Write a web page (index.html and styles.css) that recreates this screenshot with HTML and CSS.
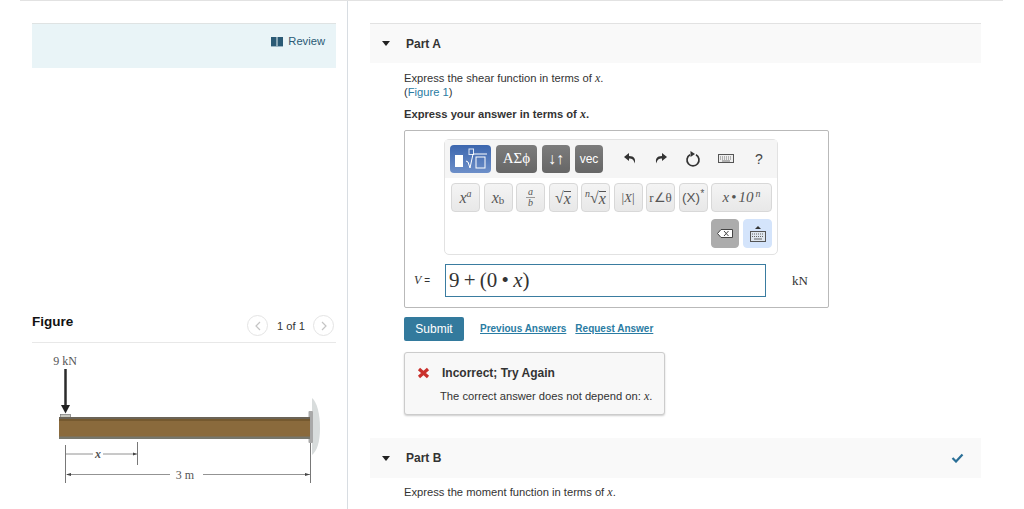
FILE: index.html
```html
<!DOCTYPE html>
<html lang="en">
<head>
  <meta charset="UTF-8">
  <title>Part A</title>
  <link rel="stylesheet" href="styles.css">
</head>
<body>
  <div class="page">
    <div class="left-col">
      <div class="review-bar">
        <svg class="book" width="14" height="10" viewBox="0 0 14 10"><path d="M1 0h5.500v9H1zM7.500 0H13v9H7.500z" fill="#2a5a75"/><path d="M1 9.500h12" stroke="#9bb6c4"/></svg>
        <span>Review</span>
      </div>
      <div class="figure-head">
        <div class="figure-title">Figure</div>
        <div class="pager">
          <span class="pager-btn"><svg width="8" height="10" viewBox="0 0 8 10"><path d="M6 1L2 5l4 4" fill="none" stroke="#c4c4c4" stroke-width="1.200"/></svg></span>
          <span class="pager-text">1 of 1</span>
          <span class="pager-btn"><svg width="8" height="10" viewBox="0 0 8 10"><path d="M2 1l4 4-4 4" fill="none" stroke="#c4c4c4" stroke-width="1.200"/></svg></span>
        </div>
      </div>
      <svg class="beam" width="304" height="150" viewBox="32 350 304 150">
        <text x="65" y="365" class="fig-text" text-anchor="middle">9 kN</text>
        <path d="M65.500 369V410" stroke="#2b2b2b" stroke-width="2.500"/>
        <path d="M61 405h9l-4.500 8.500z" fill="#222"/>
        <rect x="60.500" y="414.500" width="10" height="3" fill="#c8c8c0" stroke="#777" stroke-width=".7"/>
        <path d="M312 398c5 4 8 16 8 30s-3 23-8 27z" fill="#d8dcdc"/>
        <rect x="308.500" y="411" width="4.500" height="32" rx="1" fill="#a9a9a9"/>
        <rect x="59" y="417" width="251" height="22" fill="#8a6a3c"/>
        <rect x="59" y="417" width="251" height="2" fill="#6b6458"/>
        <rect x="59" y="419" width="251" height="2" fill="#75592f"/>
        <rect x="59" y="436.500" width="251" height="2.500" fill="#77776c"/>
        <path d="M65.500 445v38M137.500 442v23M310.500 443v40" stroke="#555" stroke-width=".8"/>
        <path d="M66 454h27M103 454h34M67 474.500h103M203 474.500h107" stroke="#777" stroke-width=".8"/>
        <path d="M66 474.500l5-1.500v3zM310 474.500l-5-1.500v3zM137 454l-4-1.500v3z" fill="#444"/>
        <text x="98" y="458" class="fig-text fig-italic" text-anchor="middle">x</text>
        <text x="185" y="479" class="fig-text" text-anchor="middle">3 m</text>
      </svg>
    </div>

    <div class="right-col">
      <div class="part-head part-a">
        <span class="caret"></span>
        <span class="part-name">Part A</span>
      </div>
      <div class="part-body">
        <p class="prompt">Express the shear function in terms of <i class="mvar">x</i>.<br>(<a class="link" href="#">Figure 1</a>)</p>
        <p class="instruction">Express your answer in terms of <i class="mvar">x</i>.</p>

        <div class="answer-box">
          <div class="toolbox">
            <div class="tool-top">
              <div class="tool-tab tab-blue">
                <svg width="34" height="22" viewBox="0 0 34 22"><rect x="1" y="7" width="8" height="12" fill="#fff"/><rect x="15" y="1" width="4.500" height="5.500" fill="none" stroke="#dfe8f5"/><path d="M12 13l2 1 2 6 3-14h14" fill="none" stroke="#fff"/><rect x="22" y="9" width="9" height="11" fill="none" stroke="#fff"/></svg>
              </div>
              <div class="tool-tab tab-gray tab-greek">ΑΣϕ</div>
              <div class="tool-tab tab-gray tab-arrows">↓↑</div>
              <div class="tool-tab tab-gray tab-vec">vec</div>
              <div class="tool-actions">
                <svg width="14" height="13" viewBox="0 0 14 13"><path d="M6 1L1 5l5 4V6.500c3 0 5 1 5.500 5 1.500-4 0-7.500-5.500-7.500z" fill="#333"/></svg>
                <svg width="14" height="13" viewBox="0 0 14 13"><path d="M8 1l5 4-5 4V6.500c-3 0-5 1-5.500 5C1 7.500 2.500 4 8 4z" fill="#333"/></svg>
                <svg width="16" height="17" viewBox="0 0 16 17"><path d="M5 4.700a6 6 0 1 0 6 0" fill="none" stroke="#333" stroke-width="1.700"/><path d="M5.500 1v6L10 4z" fill="#333"/></svg>
                <svg width="16" height="9" viewBox="0 0 16 9"><rect x=".5" y=".5" width="15" height="8" fill="#eee" stroke="#555"/><path d="M2 3h12M2 5h12" stroke="#777" stroke-dasharray="1 1"/><path d="M4 7h8" stroke="#777"/></svg>
                <span class="help">?</span>
              </div>
            </div>
            <div class="tool-row">
              <div class="key"><i>x</i><sup>a</sup></div>
              <div class="key"><i>x</i><sub>b</sub></div>
              <div class="key key-frac"><i>a</i><i>b</i></div>
              <div class="key">√<i class="over">x</i></div>
              <div class="key"><sup class="root-n">n</sup>√<i class="over">x</i></div>
              <div class="key key-small">|<i>X</i>|</div>
              <div class="key key-small">r∠θ</div>
              <div class="key key-sans">(X)<sup>*</sup></div>
              <div class="key key-wide"><i>x</i>•<i>10</i><sup>n</sup></div>
            </div>
            <div class="tool-row tool-row-end">
              <div class="key key-del">
                <svg width="16" height="9" viewBox="0 0 16 9"><path d="M4 .5h11.500v8H4L.5 4.500z" fill="#fff" stroke="#444"/><path d="M7 2l4.500 5M11.500 2L7 7" stroke="#444"/></svg>
              </div>
              <div class="key key-kbd">
                <svg width="16" height="16" viewBox="0 0 16 16"><path d="M8 0l3 3H5z" fill="#333"/><rect x=".5" y="5.500" width="15" height="10" fill="#dfe6ee" stroke="#555"/><path d="M2 8h12M2 10.500h12" stroke="#666" stroke-dasharray="1 1"/><path d="M4 13h8" stroke="#666"/></svg>
              </div>
            </div>
          </div>
          <div class="input-row">
            <span class="var-label"><i>V</i> <span class="equals">=</span></span>
            <div class="math-input">9 + (0 • <i>x</i>)</div>
            <span class="unit">kN</span>
          </div>
        </div>

        <div class="submit-row">
          <button class="submit-btn">Submit</button>
          <a class="action-link" href="#">Previous Answers</a>
          <a class="action-link" href="#">Request Answer</a>
        </div>

        <div class="feedback">
          <div class="feedback-title">
            <svg width="13" height="12" viewBox="0 0 13 12"><path d="M2 2l9 8M11 2l-9 8" stroke="#c9302c" stroke-width="3.200"/></svg>
            <span>Incorrect; Try Again</span>
          </div>
          <div class="feedback-text">The correct answer does not depend on: <i class="mvar">x</i>.</div>
        </div>
      </div>

      <div class="part-head part-b">
        <span class="caret"></span>
        <span class="part-name">Part B</span>
        <svg class="check" width="13" height="10" viewBox="0 0 13 10"><path d="M1.500 5l3.500 3.500 6.500-7" fill="none" stroke="#2a6f97" stroke-width="2.200"/></svg>
      </div>
      <div class="part-body">
        <p class="prompt prompt-b">Express the moment function in terms of <i class="mvar">x</i>.</p>
      </div>
    </div>
  </div>
</body>
</html>
```

FILE: styles.css
```css
html, body {
  margin: 0;
  padding: 0;
  height: 509px;
  overflow: hidden;
  background: #fff;
  font-family: "Liberation Sans", Arial, sans-serif;
  font-size: 11.2px;
  color: #333;
}

.page {
  display: flex;
  margin: 0 21px 0 20px;
  height: 509px;
  border-top: 1px solid #e2e2e2;
  box-sizing: border-box;
}

.left-col {
  width: 328px;
  box-sizing: border-box;
  padding: 22px 11px 0 12px;
  border-right: 1px solid #d8dde2;
}

.review-bar {
  display: flex;
  justify-content: flex-end;
  align-items: flex-start;
  gap: 4px;
  height: 45px;
  padding: 10px 11px 0 0;
  box-sizing: border-box;
  background: #e9f4f7;
  border-top: 1px solid #dfe3e3;
  color: #2a5a75;
  line-height: 15px;
}

.book {
  margin-top: 3px;
}

.figure-head {
  display: flex;
  justify-content: space-between;
  align-items: flex-start;
  height: 29px;
  margin-top: 239px;
  padding-bottom: 6px;
  border-bottom: 1px solid #e8e8e8;
}

.figure-title {
  margin-top: 7px;
  font-size: 13.500px;
  line-height: 15px;
  font-weight: bold;
  color: #111;
}

.pager {
  display: flex;
  align-items: center;
  gap: 9px;
  margin: 8px 2px 0 0;
}

.pager-text {
  width: 27px;
  white-space: nowrap;
}

.pager-btn {
  display: flex;
  align-items: center;
  justify-content: center;
  width: 21px;
  height: 21px;
  border: 1px solid #e4e4e4;
  border-radius: 50%;
  box-sizing: border-box;
}

.beam {
  display: block;
  margin-top: 7px;
}

.fig-text {
  font-family: "Liberation Serif", serif;
  font-size: 12px;
  fill: #555;
}

.fig-italic {
  font-style: italic;
  font-weight: bold;
}

.right-col {
  width: 634px;
  padding: 22px 0 0 22px;
  box-sizing: border-box;
}

.part-head {
  display: flex;
  align-items: center;
  width: 611px;
  height: 40px;
  background: #f9f9f9;
  box-sizing: border-box;
  padding-left: 12px;
}

.part-a {
  border-top: 1px solid #e2e2e2;
}

.part-b {
  margin-top: 23px;
}

.caret {
  width: 0;
  height: 0;
  border-left: 4.500px solid transparent;
  border-right: 4.500px solid transparent;
  border-top: 5px solid #222;
}

.part-name {
  margin-left: 16px;
  font-size: 12px;
  font-weight: bold;
  color: #333;
}

.check {
  margin-left: auto;
  margin-right: 17px;
}

.part-body {
  padding-left: 34px;
}

.prompt {
  margin: 8px 0 0;
  line-height: 14px;
}

.prompt-b {
  margin-top: 7px;
}

.instruction {
  margin: 8px 0 0;
  font-weight: bold;
  line-height: 14px;
}

.mvar {
  font-family: "Liberation Serif", serif;
  font-size: 12px;
}

.link {
  color: #2a7ca3;
  text-decoration: none;
}

.answer-box {
  width: 425px;
  height: 178px;
  margin-top: 9px;
  box-sizing: border-box;
  padding: 8px 0 0 39px;
  border: 1px solid #b9b9b9;
  border-radius: 2px;
}

.toolbox {
  width: 334px;
  height: 116px;
  box-sizing: border-box;
  border: 1px solid #e2e2e2;
  border-radius: 5px;
}

.tool-top {
  display: flex;
  align-items: center;
  gap: 5px;
  height: 38px;
  box-sizing: border-box;
  padding: 4px 0 5px 5px;
  background: #f5f5f5;
}

.tool-tab {
  display: flex;
  align-items: center;
  justify-content: center;
  height: 28px;
  border-radius: 4px;
  color: #fff;
  box-sizing: border-box;
}

.tab-blue {
  width: 41px;
  background: linear-gradient(#3c66ae, #6d8fc9);
}

.tab-gray {
  background: linear-gradient(#7c7c7c, #666);
}

.tab-greek {
  width: 41px;
  font-family: "Liberation Serif", serif;
  font-size: 15px;
}

.tab-arrows {
  width: 28px;
  font-size: 16px;
}

.tab-vec {
  width: 28px;
  font-size: 12px;
}

.tool-actions {
  display: flex;
  align-items: center;
  gap: 17px;
  margin-left: 15px;
}

.help {
  margin-left: 4px;
  font-size: 14px;
  color: #444;
}

.tool-row {
  display: flex;
  gap: 3.500px;
  padding: 5px 0 0 6px;
}

.tool-row-end {
  justify-content: flex-end;
  gap: 4px;
  padding: 7px 5px 0 0;
}

.key {
  display: flex;
  align-items: center;
  justify-content: center;
  width: 29px;
  height: 29px;
  box-sizing: border-box;
  border: 1px solid #d8d8d8;
  border-radius: 4px;
  background: linear-gradient(#f4f4f4, #e8e8e8);
  font-family: "Liberation Serif", serif;
  font-size: 16px;
  color: #555;
}

.key sup {
  margin-top: -7px;
  font-size: 10px;
  line-height: 1;
  font-style: italic;
}

.key sub {
  margin-top: 6px;
  font-size: 11px;
  line-height: 1;
}

.key-frac {
  flex-direction: column;
  font-size: 10px;
  line-height: 10px;
}

.key-frac i:first-child {
  padding: 0 2px;
  border-bottom: 1px solid #999;
}

.over {
  border-top: 1px solid #555;
  line-height: 13px;
}

.key-small {
  font-size: 13px;
}

.key-sans {
  font-family: "Liberation Sans", sans-serif;
  font-size: 13.500px;
}

.key-wide {
  width: 61px;
  gap: 2px;
  font-size: 15px;
}

.key-del {
  width: 28px;
  background: #acacac;
  border-color: #acacac;
}

.key-kbd {
  background: #d4e4fb;
  border-color: #d4e4fb;
}

.input-row {
  display: flex;
  align-items: center;
  margin: 9px 0 0 -30px;
  font-family: "Liberation Serif", serif;
}

.var-label {
  width: 31px;
  font-size: 12px;
}

.equals {
  font-family: "Liberation Sans", sans-serif;
  font-size: 10px;
}

.math-input {
  width: 321px;
  height: 33px;
  box-sizing: border-box;
  padding-left: 3px;
  border: 1px solid #3a7ca0;
  font-size: 21px;
  line-height: 31px;
  color: #333;
  word-spacing: -1px;
}

.unit {
  margin-left: 26px;
  font-size: 13px;
}

.submit-row {
  display: flex;
  align-items: center;
  gap: 9px;
  margin-top: 9px;
}

.submit-btn {
  width: 60px;
  height: 24px;
  margin-right: 7px;
  padding: 0;
  border: none;
  border-radius: 2px;
  background: #337a9d;
  color: #fff;
  font-family: inherit;
  font-size: 12px;
}

.action-link {
  margin-top: -2px;
  color: #2a7ca3;
  font-size: 10px;
  font-weight: bold;
}

.feedback {
  width: 261px;
  height: 63px;
  margin-top: 11px;
  box-sizing: border-box;
  padding: 13px 0 0 12px;
  background: #f8f8f8;
  border: 1px solid #ccc;
  border-radius: 3px;
  box-shadow: 0 1px 2px rgba(0, 0, 0, 0.2);
}

.feedback-title {
  display: flex;
  align-items: center;
  gap: 12px;
  font-size: 12px;
  font-weight: bold;
  line-height: 14px;
}

.feedback-text {
  margin: 9px 0 0 23px;
  line-height: 14px;
  white-space: nowrap;
}
```
